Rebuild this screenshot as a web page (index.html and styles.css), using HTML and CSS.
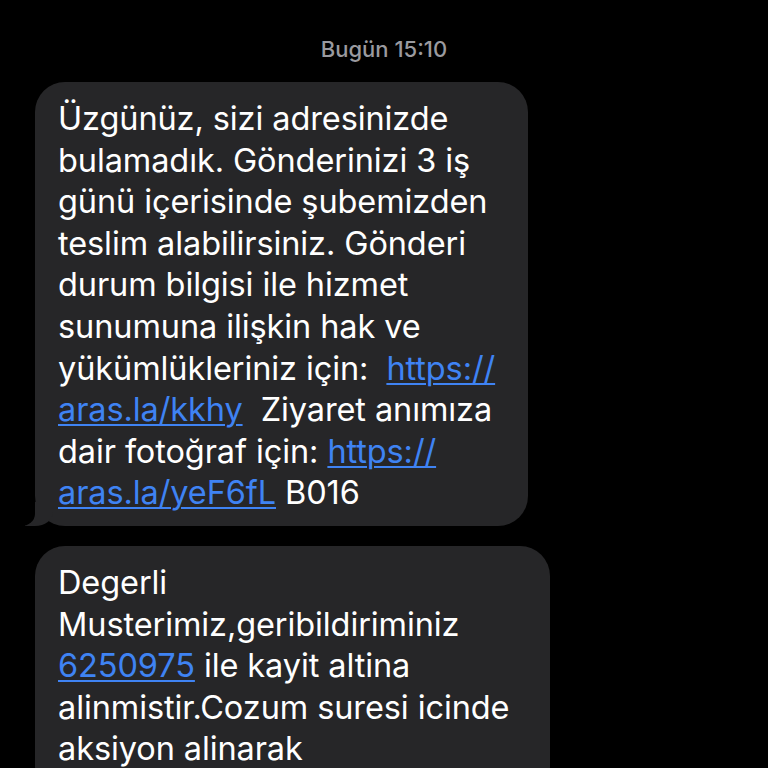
FILE: index.html
```html
<!DOCTYPE html>
<html lang="tr">
<head>
  <meta charset="UTF-8">
  <title>Mesajlar</title>
  <link rel="stylesheet" href="styles.css">
</head>
<body>

<div class="thread">
  <div class="stamp">Bugün 15:10</div>

  <div class="bubble first">
    Üzgünüz, sizi adresinizde<br>
    bulamadık. Gönderinizi 3 iş<br>
    günü içerisinde şubemizden<br>
    teslim alabilirsiniz. Gönderi<br>
    durum bilgisi ile hizmet<br>
    sunumuna ilişkin hak ve<br>
    yükümlükleriniz için:&nbsp; <a href="#">https://</a><br>
    <a href="#">aras.la/kkhy</a>&nbsp; Ziyaret anımıza<br>
    dair fotoğraf için: <a href="#">https://</a><br>
    <a href="#">aras.la/yeF6fL</a> B016
  </div>

  <div class="bubble second">
    Degerli<br>
    Musterimiz,geribildiriminiz<br>
    <a href="#">6250975</a> ile kayit altina<br>
    alinmistir.Cozum suresi icinde<br>
    aksiyon alinarak
  </div>
</div>

</body>
</html>
```

FILE: styles.css
```css
body {
  margin: 0;
  background: #000;
  color: #fff;
  font-family: Inter, 'Noto Sans', sans-serif;
  overflow: hidden;
  height: 768px;
}
.thread {
  display: flex;
  flex-direction: column;
  align-items: flex-start;
  gap: 20px;
  padding: 35px 0 0 35px;
}
.stamp {
  align-self: stretch;
  margin-left: -35px;
  text-align: center;
  color: #9a9a9f;
  font-size: 22px;
  font-weight: 500;
  line-height: 28px;
  margin-bottom: -1px;
}
.bubble {
  position: relative;
  background: #262628;
  border-radius: 30px;
  padding: 16px 18px 12px 23px;
  font-size: 32.5px;
  line-height: 41.6px;
  letter-spacing: -0.1px;
  white-space: nowrap;
  box-sizing: border-box;
}
.bubble a {
  color: #3f83f3;
  text-decoration: underline;
  text-underline-offset: 3px;
  text-decoration-thickness: 2px;
}
.first {
  width: 493px;
}
.first::before {
  content: "";
  position: absolute;
  left: -10px;
  bottom: 0;
  width: 28px;
  height: 24px;
  background: #262628;
  border-bottom-right-radius: 18px 14px;
}
.first::after {
  content: "";
  position: absolute;
  left: -26px;
  bottom: 0;
  width: 26px;
  height: 28px;
  background: #000;
  border-bottom-right-radius: 14px 12px;
}
.second {
  width: 515px;
  height: 250px;
}
```
